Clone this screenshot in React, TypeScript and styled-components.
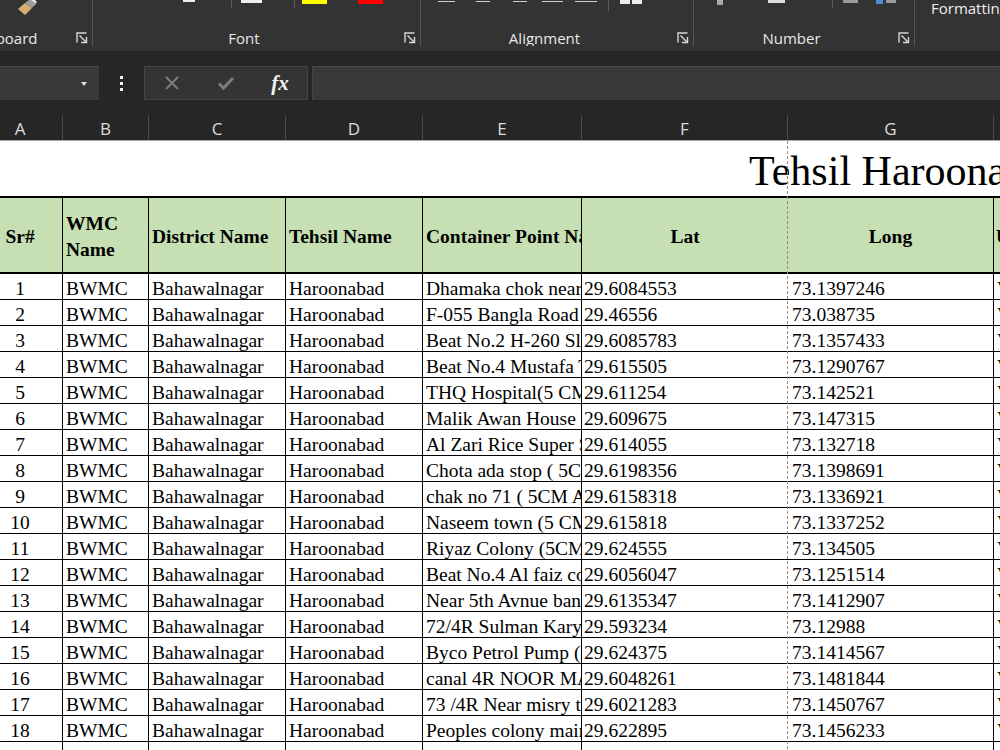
import React from "react";
import styled, { createGlobalStyle } from "styled-components";

const UI_FONT = `"Open Sans", "Noto Sans", sans-serif`;
const SHEET_FONT = `"Liberation Serif", "Times New Roman", serif`;
// A, B, C, D, E, F, G, H – column A is scrolled partly out of view
const COLS = "85px 86px 137px 137px 159px 206px 206px 150px";
const SCROLL_X = 22;

const GlobalStyle = createGlobalStyle`
  html, body { margin: 0; padding: 0; background: #262626; overflow: hidden; }
  #root { width: 1000px; height: 750px; overflow: hidden; }
`;

const Window = styled.div`
  width: 1000px;
  height: 750px;
  display: flex;
  flex-direction: column;
  overflow: hidden;
  background: #262626;
`;

/* ---------- ribbon ---------- */

const Ribbon = styled.div`
  height: 51px;
  flex: none;
  display: flex;
  align-items: flex-start;
  background: #333333;
  font-family: ${UI_FONT};
  overflow: hidden;
`;

const Group = styled.div<{ $w: number; $shift?: number; $last?: boolean }>`
  flex: none;
  width: ${(p) => p.$w}px;
  margin-left: ${(p) => -(p.$shift ?? 0)}px;
  height: 46px;
  box-sizing: border-box;
  border-right: 1px solid ${(p) => (p.$last ? "transparent" : "#555555")};
  display: flex;
  flex-direction: column;
`;

const Stubs = styled.div`
  height: 30px;
  display: flex;
  align-items: flex-start;
  overflow: hidden;
`;

const Stub = styled.span<{ $ml: number; $w: number; $h: number; $c: string; $top?: number }>`
  flex: none;
  display: block;
  margin-left: ${(p) => p.$ml}px;
  margin-top: ${(p) => p.$top ?? 0}px;
  width: ${(p) => p.$w}px;
  height: ${(p) => p.$h}px;
  background: ${(p) => p.$c};
`;

const Split = styled.span<{ $ml: number; $h: number }>`
  flex: none;
  display: block;
  margin-left: ${(p) => p.$ml}px;
  width: 1px;
  height: ${(p) => p.$h}px;
  background: #5c5c5c;
`;

const MergeIcon = styled.span<{ $ml: number }>`
  flex: none;
  display: flex;
  gap: 2px;
  margin-left: ${(p) => p.$ml}px;
  span {
    width: 10px;
    height: 4px;
    background: #ececec;
  }
`;

const BrushIcon = styled.svg<{ $ml: number }>`
  flex: none;
  margin-left: ${(p) => p.$ml}px;
`;

const CutLabel = styled.span<{ $ml: number }>`
  flex: none;
  margin-left: ${(p) => p.$ml}px;
  font-size: 15px;
  line-height: 16px;
  color: #ededed;
  white-space: nowrap;
`;

const GroupFooter = styled.div`
  height: 16px;
  display: flex;
  align-items: center;
`;

const GroupLabel = styled.span`
  flex: 1;
  text-align: center;
  font-size: 15px;
  line-height: 16px;
  color: #e8e8e8;
  white-space: nowrap;
  overflow: hidden;
`;

const LauncherBox = styled.span`
  flex: none;
  width: 25px;
  box-sizing: border-box;
  padding-left: 9px;
  display: flex;
  align-items: center;
`;

const Launcher = () => (
  <LauncherBox>
    <svg width="12" height="12" viewBox="0 0 12 12" fill="none" stroke="#d6d6d6" strokeWidth="1.4">
      <path d="M1 10.5V1H10.5" />
      <path d="M3.5 3.5L10.2 10.2" />
      <path d="M10.5 5V10.5H5" />
    </svg>
  </LauncherBox>
);

/* ---------- formula bar ---------- */

const FormulaBar = styled.div`
  height: 49px;
  flex: none;
  display: flex;
  align-items: flex-end;
  background: #262626;
`;

const NameBox = styled.div`
  width: 99px;
  height: 34px;
  box-sizing: border-box;
  background: #393939;
  border-top: 1px solid #444444;
  display: flex;
  align-items: center;
  justify-content: flex-end;
  padding-right: 12px;
`;

const DropArrow = styled.span`
  width: 0;
  height: 0;
  border-left: 3.5px solid transparent;
  border-right: 3.5px solid transparent;
  border-top: 4px solid #e2e2e2;
`;

const Grip = styled.div`
  width: 45px;
  height: 34px;
  display: flex;
  flex-direction: column;
  align-items: center;
  justify-content: center;
  gap: 3px;
  span {
    width: 3px;
    height: 3px;
    background: #f2f2f2;
  }
`;

const EditButtons = styled.div`
  width: 164px;
  height: 34px;
  box-sizing: border-box;
  border: 1px solid #444444;
  background: #343434;
  display: grid;
  grid-template-columns: repeat(3, 54px);
  align-items: center;
  justify-items: center;
`;

const FxText = styled.span`
  font-family: ${SHEET_FONT};
  font-style: italic;
  font-weight: bold;
  font-size: 21px;
  color: #f2f2f2;
  line-height: 1;
`;

const FormulaInput = styled.div`
  flex: 1;
  margin-left: 4px;
  height: 34px;
  box-sizing: border-box;
  background: #393939;
  border-top: 1px solid #4b4b4b;
  border-left: 1px solid #454545;
`;

/* ---------- column letters ---------- */

const ColumnBar = styled.div`
  height: 41px;
  flex: none;
  box-sizing: border-box;
  border-bottom: 1px solid #a9a9a9;
  display: grid;
  grid-template-columns: ${COLS};
  width: max-content;
  margin-left: -${SCROLL_X}px;
`;

const ColumnLetter = styled.div`
  margin-top: 15px;
  height: 25px;
  box-sizing: border-box;
  padding-top: 2px;
  border-right: 1px solid #4b4b4b;
  display: flex;
  align-items: center;
  justify-content: center;
  font-family: ${UI_FONT};
  font-size: 17px;
  color: #dcdcdc;
`;

/* ---------- sheet ---------- */

const Sheet = styled.div`
  position: relative;
  flex: 1;
  background: #ffffff;
  overflow: hidden;
`;

const SheetGrid = styled.div`
  display: grid;
  grid-template-columns: ${COLS};
  width: max-content;
  margin-left: -${SCROLL_X}px;
  font-family: ${SHEET_FONT};
  color: #000000;
`;

const TitleCell = styled.div`
  grid-column: 1 / -1;
  height: 55px;
  box-sizing: border-box;
  padding-left: ${749 + SCROLL_X}px;
  padding-bottom: 4px;
  display: flex;
  align-items: flex-end;
  font-size: 42px;
  line-height: 42px;
  white-space: nowrap;
  overflow: hidden;
`;

type Align = "left" | "center";

const HeadCell = styled.div<{ $align?: Align; $open?: boolean; $wrap?: boolean; $pad?: number }>`
  height: 78px;
  box-sizing: border-box;
  background: #c6e0b4;
  border-top: 2px solid #000000;
  border-bottom: 2px solid #000000;
  border-right: ${(p) => (p.$open ? "none" : "1px solid #000000")};
  padding: 3px ${(p) => p.$pad ?? 3}px 0;
  display: flex;
  align-items: center;
  justify-content: ${(p) => (p.$align === "center" ? "center" : "flex-start")};
  font-size: 19.5px;
  font-weight: bold;
  line-height: 1.3;
  white-space: ${(p) => (p.$wrap ? "normal" : "nowrap")};
  overflow: hidden;
`;

const DataCell = styled.div<{ $align?: Align; $open?: boolean; $pad?: number }>`
  height: 26px;
  box-sizing: border-box;
  border-bottom: 1px solid #000000;
  border-right: ${(p) => (p.$open ? "none" : "1px solid #000000")};
  padding: 0 ${(p) => p.$pad ?? 3}px;
  display: flex;
  align-items: flex-end;
  justify-content: ${(p) => (p.$align === "center" ? "center" : "flex-start")};
  font-size: 19.5px;
  line-height: 1.1;
  white-space: nowrap;
  overflow: hidden;
`;

// dashed page break between columns F and G
const PageBreak = styled.div`
  position: absolute;
  top: 0;
  bottom: 0;
  left: 787px;
  width: 1px;
  background: repeating-linear-gradient(to bottom, #8c8c8c 0 3px, transparent 3px 5px);
  pointer-events: none;
`;

type Point = { place: string; lat: string; long: string };

const POINTS: Point[] = [
  { place: "Dhamaka chok near Masjid", lat: "29.6084553", long: "73.1397246" },
  { place: "F-055 Bangla Road Haroonabad", lat: "29.46556", long: "73.038735" },
  { place: "Beat No.2 H-260 Slaughter House", lat: "29.6085783", long: "73.1357433" },
  { place: "Beat No.4 Mustafa Town", lat: "29.615505", long: "73.1290767" },
  { place: "THQ Hospital(5 CM)", lat: "29.611254", long: "73.142521" },
  { place: "Malik Awan House", lat: "29.609675", long: "73.147315" },
  { place: "Al Zari Rice Super Store", lat: "29.614055", long: "73.132718" },
  { place: "Chota ada stop ( 5CM )", lat: "29.6198356", long: "73.1398691" },
  { place: "chak no 71 ( 5CM Approx )", lat: "29.6158318", long: "73.1336921" },
  { place: "Naseem town (5 CM)", lat: "29.615818", long: "73.1337252" },
  { place: "Riyaz Colony (5CM)", lat: "29.624555", long: "73.134505" },
  { place: "Beat No.4 Al faiz colony", lat: "29.6056047", long: "73.1251514" },
  { place: "Near 5th Avnue bank", lat: "29.6135347", long: "73.1412907" },
  { place: "72/4R Sulman Karyana", lat: "29.593234", long: "73.12988" },
  { place: "Byco Petrol Pump (5CM)", lat: "29.624375", long: "73.1414567" },
  { place: "canal 4R NOOR MASJID", lat: "29.6048261", long: "73.1481844" },
  { place: "73 /4R Near misry town", lat: "29.6021283", long: "73.1450767" },
  { place: "Peoples colony main", lat: "29.622895", long: "73.1456233" },
  { place: "Shadman colony", lat: "29.6112041", long: "73.1371865" },
];

const LETTERS = ["A", "B", "C", "D", "E", "F", "G", "H"];

const App = () => {
  return (
    <Window>
      <GlobalStyle />

      <Ribbon>
        <Group $w={153} $shift={60}>
          <Stubs>
            <BrushIcon $ml={77} width="21" height="16" viewBox="0 0 21 16">
              <polygon points="1,9 8,3 15,8 8,15" fill="#d8ae72" />
              <polygon points="8,3 13,-1 20,3 15,8" fill="#9d9d9d" />
              <polygon points="14,0 17,-1 20,2 18,3" fill="#e6e6e6" />
            </BrushIcon>
          </Stubs>
          <GroupFooter>
            <GroupLabel>Clipboard</GroupLabel>
            <Launcher />
          </GroupFooter>
        </Group>

        <Group $w={328}>
          <Stubs>
            <Stub $ml={90} $w={12} $h={2} $c="#eeeeee" />
            <Split $ml={36} $h={8} />
            <Stub $ml={9} $w={21} $h={3} $c="#eeeeee" />
            <Split $ml={32} $h={8} />
            <Stub $ml={7} $w={25} $h={4} $c="#ffff00" />
            <Stub $ml={31} $w={25} $h={4} $c="#ff0000" />
          </Stubs>
          <GroupFooter>
            <GroupLabel>Font</GroupLabel>
            <Launcher />
          </GroupFooter>
        </Group>

        <Group $w={273}>
          <Stubs>
            <Stub $ml={17} $w={17} $h={1} $top={1} $c="#cfcfcf" />
            <Stub $ml={21} $w={14} $h={1} $top={1} $c="#cfcfcf" />
            <Stub $ml={23} $w={14} $h={1} $top={1} $c="#cfcfcf" />
            <Stub $ml={15} $w={21} $h={1} $top={1} $c="#cfcfcf" />
            <Stub $ml={12} $w={22} $h={1} $top={1} $c="#cfcfcf" />
            <Split $ml={11} $h={11} />
            <MergeIcon $ml={11}>
              <span />
              <span />
            </MergeIcon>
          </Stubs>
          <GroupFooter>
            <GroupLabel>Alignment</GroupLabel>
            <Launcher />
          </GroupFooter>
        </Group>

        <Group $w={221}>
          <Stubs>
            <Stub $ml={23} $w={6} $h={5} $c="#a8a8a8" />
            <Stub $ml={45} $w={17} $h={3} $c="#dddddd" />
            <Split $ml={47} $h={8} />
            <Stub $ml={10} $w={15} $h={3} $c="#9a9a9a" />
            <Stub $ml={18} $w={7} $h={4} $c="#4a8fd8" />
            <Stub $ml={3} $w={10} $h={3} $c="#9a9a9a" />
          </Stubs>
          <GroupFooter>
            <GroupLabel>Number</GroupLabel>
            <Launcher />
          </GroupFooter>
        </Group>

        <Group $w={200} $last>
          <Stubs>
            <CutLabel $ml={16}>Formatting</CutLabel>
          </Stubs>
        </Group>
      </Ribbon>

      <FormulaBar>
        <NameBox>
          <DropArrow />
        </NameBox>
        <Grip>
          <span />
          <span />
          <span />
        </Grip>
        <EditButtons>
          <svg width="16" height="16" viewBox="0 0 16 16" stroke="#7c7c7c" strokeWidth="2" fill="none">
            <path d="M2 2L14 14M14 2L2 14" />
          </svg>
          <svg width="18" height="16" viewBox="0 0 18 16" stroke="#7c7c7c" strokeWidth="3" fill="none">
            <path d="M2 8.5L6.5 13L16 3" />
          </svg>
          <FxText>fx</FxText>
        </EditButtons>
        <FormulaInput />
      </FormulaBar>

      <ColumnBar>
        {LETTERS.map((l) => (
          <ColumnLetter key={l}>{l}</ColumnLetter>
        ))}
      </ColumnBar>

      <Sheet>
        <SheetGrid>
          <TitleCell>Tehsil Haroonabad Container Points List</TitleCell>

          <HeadCell $align="center">Sr#</HeadCell>
          <HeadCell $wrap>WMC Name</HeadCell>
          <HeadCell>District Name</HeadCell>
          <HeadCell>Tehsil Name</HeadCell>
          <HeadCell>Container Point Name</HeadCell>
          <HeadCell $align="center" $open>Lat</HeadCell>
          <HeadCell $align="center">Long</HeadCell>
          <HeadCell $pad={2}>UC Name</HeadCell>

          {POINTS.map((p, i) => (
            <React.Fragment key={i}>
              <DataCell $align="center">{i + 1}</DataCell>
              <DataCell>BWMC</DataCell>
              <DataCell>Bahawalnagar</DataCell>
              <DataCell>Haroonabad</DataCell>
              <DataCell>{p.place}</DataCell>
              <DataCell $open $pad={2}>{p.lat}</DataCell>
              <DataCell $pad={4}>{p.long}</DataCell>
              <DataCell $pad={3}>Valid</DataCell>
            </React.Fragment>
          ))}
        </SheetGrid>
        <PageBreak />
      </Sheet>
    </Window>
  );
};

export default App;
